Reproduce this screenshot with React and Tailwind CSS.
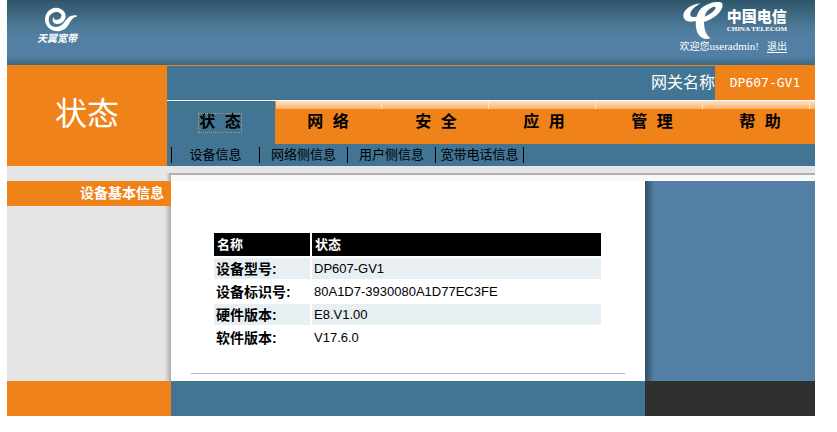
import React, { useState } from 'react';

const menuItems = ['状 态', '网 络', '安 全', '应 用', '管 理', '帮 助'];

const subMenuItems = ['设备信息', '网络侧信息', '用户侧信息', '宽带电话信息'];

const deviceInfo = [
  { name: '设备型号:', value: 'DP607-GV1' },
  { name: '设备标识号:', value: '80A1D7-3930080A1D77EC3FE' },
  { name: '硬件版本:', value: 'E8.V1.00' },
  { name: '软件版本:', value: 'V17.6.0' },
];

const TianyiLogo = () => (
  <div className="flex flex-col items-end text-white">
    <svg width="33" height="25" viewBox="135 22 99 75" fill="none" aria-hidden="true">
      {/* outer ring, open towards the tail */}
      <path
        d="M233 47C214 45 206 54 197 66C185 84 164 86 154 75C144 60 150 40 170 37C182 36 189 44 188 52L199 54C203 38 190 25 171 24C150 25 137 42 138 62C140 82 156 95 176 95C196 94 206 82 213 68C218 58 224 52 233 51Z"
        fill="white"
      />
      {/* inner curl */}
      <path
        d="M200 50C198 66 186 74 174 73C162 72 157 61 164 51C164 59 169 62 176 60C183 58 187 54 187 48Z"
        fill="white"
      />
    </svg>
    <span className="text-[10px] leading-[14px] font-bold italic">天翼宽带</span>
  </div>
);

const TelecomLogo = () => (
  <div className="flex items-start gap-1 text-white">
    <svg width="40" height="38" viewBox="3 6 120 114" fill="none" aria-hidden="true">
      {/* left horn */}
      <path
        d="M56 10C28 12 3 30 4 48C6 68 30 68 50 60L52 47C38 53 26 53 25 44C24 33 38 20 56 10Z"
        fill="white"
      />
      {/* stem and right horn */}
      <path
        d="M86 114C66 123 48 110 43 88C38 62 44 36 62 21C80 8 108 2 119 8C127 17 117 36 100 49C89 57 77 63 66 66C66 86 72 108 86 114ZM68 50C82 45 94 36 99 28C103 20 99 18 91 22C78 28 70 38 68 50Z"
        fill="white"
        fillRule="evenodd"
      />
    </svg>
    <div className="flex flex-col pt-[6px]">
      <span className="text-[15px] leading-[17px] font-black">中国电信</span>
      <span className="font-['Liberation_Serif',serif] text-[7px] leading-[8px] font-bold">
        CHINA TELECOM
      </span>
    </div>
  </div>
);

const Header = () => (
  <header className="flex h-[65px] justify-between bg-[linear-gradient(to_bottom,#2f5569_0px,#3c667f_12px,#4d7998_27px,#527fa3_36px,#527fa3_56px,#3f6882_65px)] pr-7 pl-[30px]">
    <div className="pt-[7px]">
      <TianyiLogo />
    </div>
    <div className="flex flex-col items-end pt-[2px]">
      <TelecomLogo />
      <div className="flex items-baseline text-[10px] leading-[12px] text-white">
        <span>欢迎您</span>
        <span className="font-['Liberation_Serif',serif] text-[11px]">useradmin!</span>
        <a href="#logout" className="ml-2 underline underline-offset-2">退出</a>
      </div>
    </div>
  </header>
);

const MainMenu = ({ active, onSelect }) => (
  <nav className="flex border-t border-white bg-[#ef8219] bg-[repeating-linear-gradient(to_right,transparent_0px,transparent_105px,#ffe6cc_105px,#ffe6cc_106px,transparent_106px,transparent_107px),linear-gradient(to_bottom,#ffe0c8,#fdb469)] bg-[length:100%_8px] bg-[position:109px_0px] bg-no-repeat">
    {menuItems.map((item) => (
      <a
        key={item}
        href="#menu"
        onClick={() => onSelect(item)}
        className={`flex h-[43px] flex-1 items-center justify-center pr-[2px] font-['Liberation_Mono','Noto_Sans_CJK_SC',monospace] text-base leading-[18px] font-bold text-black ${
          item === active ? 'bg-[#427594]' : ''
        }`}
      >
        <span className={item === active ? 'outline-1 outline-dotted outline-[#c98f6c]' : ''}>
          {item}
        </span>
      </a>
    ))}
  </nav>
);

const SubMenu = () => (
  <ul className="flex h-[22px] items-center bg-[#427594] pl-1">
    {subMenuItems.map((item) => (
      <li
        key={item}
        className="flex h-4 w-[88px] items-center justify-center border-l border-black text-[13px] leading-4 whitespace-nowrap last:w-[89px] last:border-r"
      >
        <a href="#sub">{item}</a>
      </li>
    ))}
  </ul>
);

const DeviceTable = () => (
  <table className="w-full table-fixed border-separate border-spacing-0 text-left text-black">
    <thead>
      <tr className="h-[25px] text-[13px] leading-5 text-white">
        <th className="w-[98px] border-r-2 border-b-2 border-white bg-black px-[3px] py-0 align-middle">名称</th>
        <th className="border-b-2 border-white bg-black px-[3px] py-0 align-middle">状态</th>
      </tr>
    </thead>
    <tbody>
      {deviceInfo.map((row, index) => (
        <tr
          key={row.name}
          className={`h-[23px] leading-5 ${index % 2 === 0 ? 'bg-[#e7eff3]' : 'bg-white'}`}
        >
          <th className="border-r-2 border-b-2 border-white px-[2px] py-0 text-[14px] font-bold">{row.name}</th>
          <td className="border-b-2 border-white px-[2px] py-0 text-[13px]">{row.value}</td>
        </tr>
      ))}
    </tbody>
  </table>
);

const App = () => {
  const [active, setActive] = useState(menuItems[0]);

  return (
    <div className="bg-white pr-[22px] pb-4 pl-[7px] font-['Liberation_Sans','Noto_Sans_CJK_SC',sans-serif]">
      <Header />

      <div className="flex">
        <div className="flex w-[160px] shrink-0 items-center justify-center bg-[#ef8219] pb-1">
          <h1 className="text-[32px] leading-10 text-white">{active.replace(' ', '')}</h1>
        </div>
        <div className="min-w-0 flex-1 border-t border-[#ef8219]">
          <div className="flex h-[34px] justify-end bg-[#427594] text-base text-white">
            <span className="flex items-center">网关名称</span>
            <span className="flex w-[100px] items-center justify-center bg-[#ef8219] font-['DejaVu_Sans_Mono',monospace] text-[13px]">
              DP607-GV1
            </span>
          </div>
          <MainMenu active={active} onSelect={setActive} />
          <SubMenu />
        </div>
      </div>

      <div className="flex h-[15px] bg-[#e6e6e6]">
        <div className="w-[160px] shrink-0" />
        <div className="mt-[7px] w-1 shrink-0 bg-[linear-gradient(to_left,#a8a8a8,#d8d8d8)]" />
        <div className="mt-[7px] flex-1 border-t-2 border-[#b0b0b0] bg-[#f8f8f8]" />
      </div>

      <div className="flex">
        <aside className="w-[164px] shrink-0 bg-[linear-gradient(to_left,#a8a8a8,#dcdcdc_5px,#e6e6e6_8px)]">
          <h2 className="bg-[#ef8219] pr-[7px] text-right text-[14px] leading-[25px] font-bold text-white">
            设备基本信息
          </h2>
        </aside>
        <main className="min-w-0 flex-1 bg-white px-5 pt-[52px] pb-[7px]">
          <div className="border-b border-[#bcb0dc] pr-6 pb-[23px] pl-[23px]">
            <DeviceTable />
          </div>
        </main>
        <div className="w-[170px] shrink-0 bg-[linear-gradient(to_right,#2f4f66,#527fa3_9px)]" />
      </div>

      <footer className="flex h-[35px]">
        <div className="w-[164px] shrink-0 bg-[#ef8219]" />
        <div className="flex-1 bg-[#427594]" />
        <div className="w-[170px] shrink-0 bg-[#303030]" />
      </footer>
    </div>
  );
};

export default App;
